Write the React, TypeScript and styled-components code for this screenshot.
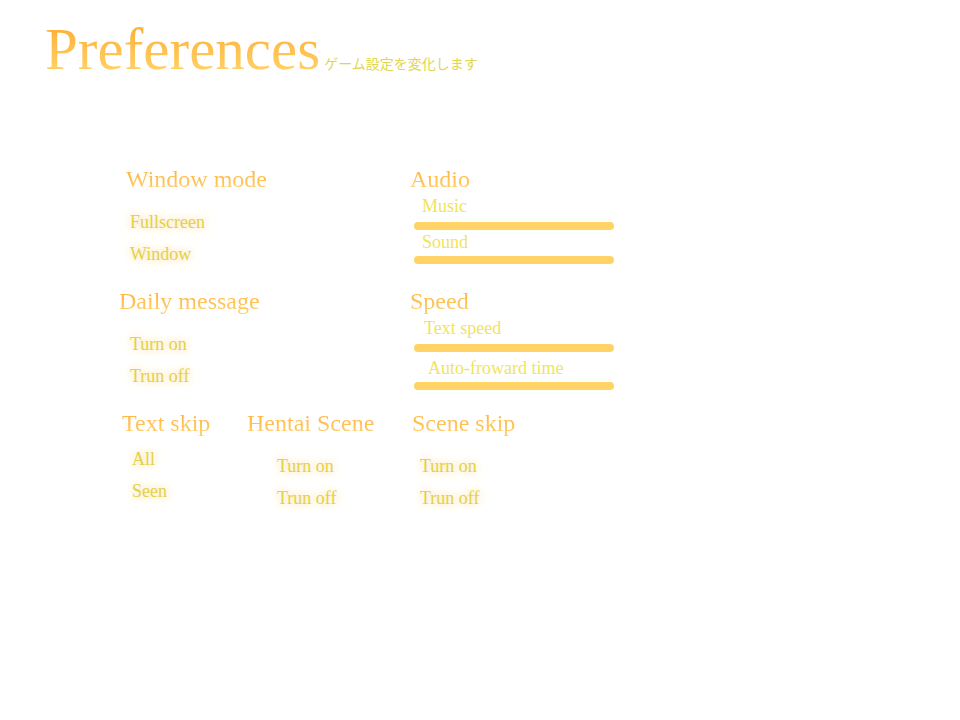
import React, { useState } from "react";
import styled, { createGlobalStyle } from "styled-components";

const GlobalStyle = createGlobalStyle`
  * { box-sizing: border-box; }
  body {
    margin: 0;
    background: #fff;
    font-family: "Liberation Serif", "Noto Sans CJK JP", serif;
  }
`;

const Page = styled.div`
  display: flex;
  flex-direction: column;
  gap: 84px;
  padding: 17px 45px 40px;
`;

const Header = styled.header`
  display: flex;
  flex-wrap: wrap;
  align-items: baseline;
  column-gap: 4px;
`;

const Title = styled.h1`
  margin: 0;
  font-size: 59px;
  line-height: 64px;
  font-weight: 400;
  color: transparent;
  background: linear-gradient(#ffaf36 15%, #ffd166 85%);
  background-clip: text;
`;

const Subtitle = styled.p`
  margin: 0;
  font-family: "Noto Sans CJK JP", sans-serif;
  font-size: 14px;
  line-height: 20px;
  font-weight: 400;
  color: #e2d64e;
`;

const Settings = styled.main`
  display: grid;
  grid-template-columns: 128px 163px minmax(204px, 1fr);
  row-gap: 17px;
  padding-left: 74px;
`;

const Section = styled.section<{ $span?: number }>`
  display: flex;
  flex-direction: column;
  align-items: flex-start;
  grid-column: span ${(p) => p.$span ?? 1};
`;

const Heading = styled.h2<{ $indent: number }>`
  margin: 0 0 0 ${(p) => p.$indent}px;
  font-size: 24px;
  line-height: 28px;
  font-weight: 400;
  white-space: nowrap;
  color: transparent;
  background: linear-gradient(#ffb441 20%, #ffcd66 85%);
  background-clip: text;
`;

const Options = styled.div<{ $indent: number; $top: number }>`
  display: flex;
  flex-direction: column;
  align-items: flex-start;
  margin-top: ${(p) => p.$top}px;
  margin-left: ${(p) => p.$indent}px;
`;

const OptionButton = styled.button`
  padding: 0;
  border: 0;
  background: none;
  font-family: inherit;
  font-size: 18px;
  line-height: 32px;
  color: #e1d246;
  text-shadow: 0 0 12px #ffdca6, 0 0 8px #ffe6c2;
  cursor: pointer;
`;

const Sliders = styled.div<{ $gap: number }>`
  display: flex;
  flex-direction: column;
  gap: ${(p) => p.$gap}px;
  margin-top: 3px;
`;

const SliderField = styled.div<{ $gap: number }>`
  display: flex;
  flex-direction: column;
  gap: ${(p) => p.$gap}px;
`;

const SliderLabel = styled.label<{ $indent: number }>`
  padding-left: ${(p) => p.$indent}px;
  font-size: 18px;
  line-height: 20px;
  color: #f0e45c;
`;

const Range = styled.input`
  appearance: none;
  width: 200px;
  height: 8px;
  margin: 0 0 0 4px;
  border-radius: 4px;
  background: #ffd366;
  cursor: pointer;

  &::-webkit-slider-thumb {
    appearance: none;
    width: 8px;
    height: 8px;
    background: transparent;
  }
`;

type ChoiceProps = {
  title: string;
  options: string[];
  indent?: number;
  optionIndent: number;
  top?: number;
  span?: number;
};

function Choice({ title, options, indent = 0, optionIndent, top = 13, span }: ChoiceProps) {
  const [selected, setSelected] = useState(0);
  return (
    <Section $span={span}>
      <Heading $indent={indent}>{title}</Heading>
      <Options $indent={optionIndent} $top={top} role="group" aria-label={title}>
        {options.map((option, i) => (
          <OptionButton
            key={option}
            type="button"
            aria-pressed={selected === i}
            onClick={() => setSelected(i)}
          >
            {option}
          </OptionButton>
        ))}
      </Options>
    </Section>
  );
}

type SliderProps = { id: string; label: string; indent: number; gap: number };

function Slider({ id, label, indent, gap }: SliderProps) {
  return (
    <SliderField $gap={gap}>
      <SliderLabel htmlFor={id} $indent={indent}>{label}</SliderLabel>
      <Range id={id} type="range" defaultValue={100} />
    </SliderField>
  );
}

export default function App() {
  return (
    <>
      <GlobalStyle />
      <Page>
        <Header>
          <Title>Preferences</Title>
          <Subtitle lang="ja">ゲーム設定を変化します</Subtitle>
        </Header>
        <Settings>
          <Choice title="Window mode" options={["Fullscreen", "Window"]} indent={7} optionIndent={11} span={2} />
          <Section>
            <Heading $indent={0}>Audio</Heading>
            <Sliders $gap={2}>
              <Slider id="music" label="Music" indent={12} gap={6} />
              <Slider id="sound" label="Sound" indent={12} gap={4} />
            </Sliders>
          </Section>
          <Choice title="Daily message" options={["Turn on", "Trun off"]} optionIndent={11} span={2} />
          <Section>
            <Heading $indent={0}>Speed</Heading>
            <Sliders $gap={6}>
              <Slider id="text-speed" label="Text speed" indent={14} gap={6} />
              <Slider id="auto-forward" label="Auto-froward time" indent={18} gap={4} />
            </Sliders>
          </Section>
          <Choice title="Text skip" options={["All", "Seen"]} indent={3} optionIndent={13} top={6} />
          <Choice title="Hentai Scene" options={["Turn on", "Trun off"]} optionIndent={30} />
          <Choice title="Scene skip" options={["Turn on", "Trun off"]} indent={2} optionIndent={10} />
        </Settings>
      </Page>
    </>
  );
}
